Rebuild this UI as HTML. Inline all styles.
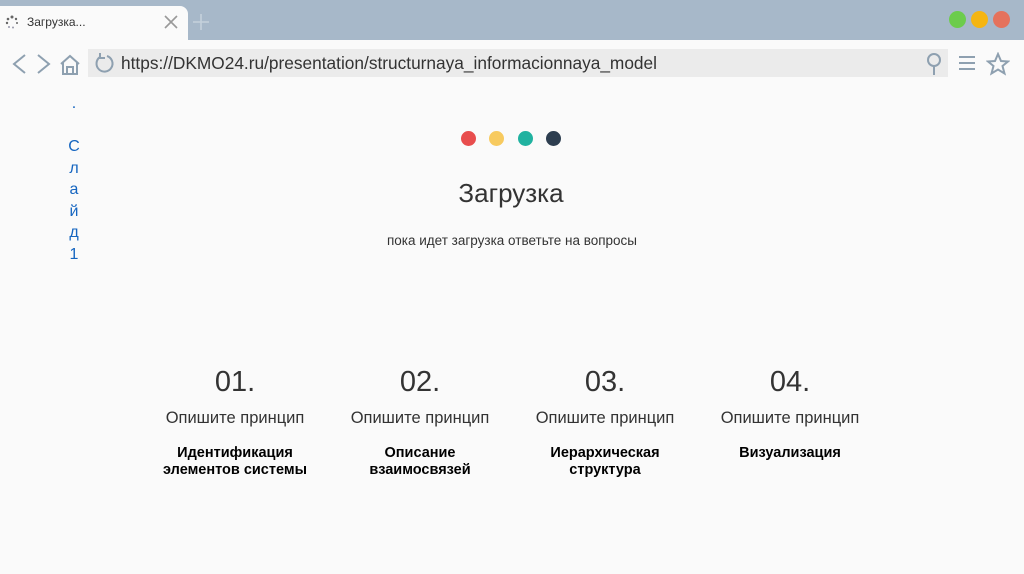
<!DOCTYPE html>
<html><head><meta charset="utf-8"><style>
*{margin:0;padding:0;box-sizing:border-box}
body{width:1024px;height:574px;overflow:hidden;background:#fafafa;font-family:"Liberation Sans","DejaVu Sans",sans-serif;position:relative;color:#333}
.top{position:absolute;left:0;top:0;width:1024px;height:40px;background:#a7b8c9}
.tab{position:absolute;left:0;top:6px;width:188px;height:36px;background:#fafafa;border-radius:0 8px 0 0}
.abs{position:absolute}
.addr{position:absolute;left:88px;top:49px;width:860px;height:28px;background:#ebebeb}
.c{position:absolute;text-align:center;width:200px;white-space:nowrap}
</style></head><body>
<div class="top"></div>
<div class="tab"></div>
<div class="abs" style="left:5px;top:15px;width:14px;height:14px">
<svg width="14" height="14"><g fill="#666"><circle cx="7" cy="2" r="1.5"/><circle cx="11" cy="4" r="1.2"/><circle cx="12" cy="8" r="1"/><circle cx="3" cy="4" r="1.3"/><circle cx="2" cy="8" r="1.2"/><circle cx="4" cy="12" r="1" fill="#99a"/><circle cx="8" cy="12.5" r="1" fill="#99a"/></g></svg></div>
<div class="abs" style="left:27px;top:15px;font-size:12px;color:#333">Загрузка...</div>
<svg class="abs" style="left:164px;top:15px" width="14" height="14"><path d="M1 1L13 13M13 1L1 13" stroke="#999" stroke-width="1.6"/></svg>
<svg class="abs" style="left:193px;top:14px" width="16" height="16"><path d="M8 0V16M0 8H16" stroke="#c5d1dc" stroke-width="1.6"/></svg>
<div class="abs" style="left:949px;top:11px;width:17px;height:17px;border-radius:50%;background:#6ccc4c"></div>
<div class="abs" style="left:971px;top:11px;width:17px;height:17px;border-radius:50%;background:#f5b511"></div>
<div class="abs" style="left:993px;top:11px;width:17px;height:17px;border-radius:50%;background:#e5725c"></div>
<svg class="abs" style="left:10px;top:52px" width="74" height="24" fill="none" stroke="#8ea0b0" stroke-width="2">
<path d="M15 3L4 12L15 21"/><path d="M28 3L39 12L28 21"/><path d="M51 12L60 4L69 12M53 10V22H67V10M57 22V15H63V22"/></svg>
<div class="addr"></div>
<svg class="abs" style="left:93px;top:52px" width="22" height="22" fill="none" stroke="#8ea0b0" stroke-width="2"><path d="M7 5A8 8 0 1 0 14 4"/><path d="M7 1V6H12"/></svg>
<div class="abs" style="left:121px;top:53px;font-size:17.3px;color:#333;white-space:nowrap">https://DKMO24.ru/presentation/structurnaya_informacionnaya_model</div>
<svg class="abs" style="left:924px;top:52px" width="20" height="24" fill="none" stroke="#8ea0b0" stroke-width="2"><circle cx="10" cy="8" r="6"/><path d="M10 14V23"/></svg>
<svg class="abs" style="left:958px;top:55px" width="18" height="16" stroke="#8ea0b0" stroke-width="2"><path d="M1 2H17M1 8H17M1 14H17"/></svg>
<svg class="abs" style="left:986px;top:52px" width="24" height="24" fill="none" stroke="#8ea0b0" stroke-width="2"><path d="M12 2L15 9L22 9.5L16.5 14L18.5 21.5L12 17.5L5.5 21.5L7.5 14L2 9.5L9 9Z"/></svg>
<div class="abs" style="left:67px;top:93px;font-size:16px;line-height:21.5px;color:#1565c0;text-align:center;width:14px">.<br><br>С<br>л<br>а<br>й<br>д<br>1</div>
<div class="abs" style="left:461px;top:131px;width:15px;height:15px;border-radius:50%;background:#e84d4d"></div>
<div class="abs" style="left:489px;top:131px;width:15px;height:15px;border-radius:50%;background:#f7ca5f"></div>
<div class="abs" style="left:518px;top:131px;width:15px;height:15px;border-radius:50%;background:#20b2a0"></div>
<div class="abs" style="left:546px;top:131px;width:15px;height:15px;border-radius:50%;background:#2d3e50"></div>
<div class="c" style="left:411px;top:178px;font-size:26px;color:#333">Загрузка</div>
<div class="c" style="left:312px;top:233px;width:400px;font-size:13.5px;color:#333">пока идет загрузка ответьте на вопросы</div>
<div class="c" style="left:135px;top:366px;font-size:29px;color:#333">01.</div>
<div class="c" style="left:320px;top:366px;font-size:29px;color:#333">02.</div>
<div class="c" style="left:505px;top:366px;font-size:29px;color:#333">03.</div>
<div class="c" style="left:690px;top:366px;font-size:29px;color:#333">04.</div>
<div class="c" style="left:135px;top:409px;font-size:16.5px;color:#333">Опишите принцип</div>
<div class="c" style="left:320px;top:409px;font-size:16.5px;color:#333">Опишите принцип</div>
<div class="c" style="left:505px;top:409px;font-size:16.5px;color:#333">Опишите принцип</div>
<div class="c" style="left:690px;top:409px;font-size:16.5px;color:#333">Опишите принцип</div>
<div class="c" style="left:135px;top:445px;font-size:14.5px;font-weight:bold;line-height:17px;color:#000">Идентификация<br>элементов системы</div>
<div class="c" style="left:320px;top:445px;font-size:14.5px;font-weight:bold;line-height:17px;color:#000">Описание<br>взаимосвязей</div>
<div class="c" style="left:505px;top:445px;font-size:14.5px;font-weight:bold;line-height:17px;color:#000">Иерархическая<br>структура</div>
<div class="c" style="left:690px;top:445px;font-size:14.5px;font-weight:bold;line-height:17px;color:#000">Визуализация</div>
</body></html>
